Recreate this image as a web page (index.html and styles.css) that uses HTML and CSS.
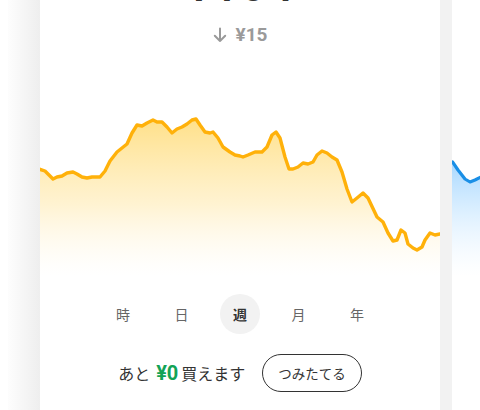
FILE: index.html
```html
<!DOCTYPE html>
<html lang="ja">
<head>
<meta charset="utf-8">
<title>積立</title>
<link rel="stylesheet" href="styles.css">
</head>
<body>
<div class="stage">
  <div class="edge"></div>
  <section class="card">
    <div class="amount">¥164</div>
    <div class="change">
      <svg class="arrow" width="14" height="16" viewBox="0 0 14 16"><path d="M7 1.5V14M1.8 8.8L7 14l5.2-5.2" fill="none" stroke="currentColor" stroke-width="2" stroke-linecap="round" stroke-linejoin="round"/></svg>
      <span>¥15</span>
    </div>
    <svg class="chart" width="400" height="180" viewBox="40 100 400 180">
      <defs>
        <linearGradient id="gold" x1="0" y1="118" x2="0" y2="276" gradientUnits="userSpaceOnUse">
          <stop offset="0" stop-color="#ffd766" stop-opacity="0.78"/>
          <stop offset="0.55" stop-color="#ffe49a" stop-opacity="0.45"/>
          <stop offset="1" stop-color="#fff3d6" stop-opacity="0"/>
        </linearGradient>
      </defs>
      <path fill="url(#gold)" d="M39 169L45 171L53 179L57 177L62 176L67 173L73 172L77 174L82 177L87 178L92 177L100 177L105 171L110 161L117 152L122 148L127 144L132 133L137 125L142 126L147 123L153 120L157 122L162 122L167 127L172 133L177 129L182 127L187 124L192 120L196 119L200 125L205 132L210 133L213 132L218 138L223 147L230 152L235 155L240 156L243 157L248 155L255 152L262 152L267 147L272 135L276 132L280 138L285 157L289 169L293 169L298 167L303 163L308 164L313 162L317 155L322 151L327 153L332 157L337 160L342 172L347 189L352 202L357 198L363 193L368 198L377 217L383 222L388 233L393 241L397 240L401 230L405 233L408 244L413 248L417 250L422 247L425 240L430 233L435 235L440 234L440 280L39 280Z"/>
      <polyline fill="none" stroke="#ffb10a" stroke-width="3.4" stroke-linejoin="round" stroke-linecap="round" points="39,169 45,171 53,179 57,177 62,176 67,173 73,172 77,174 82,177 87,178 92,177 100,177 105,171 110,161 117,152 122,148 127,144 132,133 137,125 142,126 147,123 153,120 157,122 162,122 167,127 172,133 177,129 182,127 187,124 192,120 196,119 200,125 205,132 210,133 213,132 218,138 223,147 230,152 235,155 240,156 243,157 248,155 255,152 262,152 267,147 272,135 276,132 280,138 285,157 289,169 293,169 298,167 303,163 308,164 313,162 317,155 322,151 327,153 332,157 337,160 342,172 347,189 352,202 357,198 363,193 368,198 377,217 383,222 388,233 393,241 397,240 401,230 405,233 408,244 413,248 417,250 422,247 425,240 430,233 435,235 440,234"/>
    </svg>
    <nav class="tabs">
      <span class="tab">時</span>
      <span class="tab">日</span>
      <span class="tab active">週</span>
      <span class="tab">月</span>
      <span class="tab">年</span>
    </nav>
    <div class="buy">
      <p class="remain">あと<b class="yen">¥0</b>買えます</p>
      <button class="cta" type="button">つみたてる</button>
    </div>
  </section>
  <div class="gap"></div>
  <section class="card next">
    <svg class="chart mini" width="28" height="180" viewBox="452 100 28 180">
      <defs>
        <linearGradient id="sky" x1="0" y1="160" x2="0" y2="276" gradientUnits="userSpaceOnUse">
          <stop offset="0" stop-color="#8fcdff" stop-opacity="0.8"/>
          <stop offset="1" stop-color="#d8eeff" stop-opacity="0"/>
        </linearGradient>
      </defs>
      <path fill="url(#sky)" d="M452 162L458 170L465 179L470 182L475 180L480 177L480 280L452 280Z"/>
      <polyline fill="none" stroke="#1a8fe6" stroke-width="3.2" stroke-linejoin="round" stroke-linecap="round" points="452.5,162 458,170 465,179 470,182 475,180 481,177"/>
    </svg>
  </section>
</div>
</body>
</html>
```
FILE: styles.css
```css
body {
  margin: 0;
  background: #fff;
  font-family: "Noto Sans CJK JP", sans-serif;
}

.stage {
  display: flex;
  height: 410px;
  overflow: hidden;
}

.edge {
  flex: none;
  width: 32px;
  margin-left: 8px;
  background: linear-gradient(to right, #fdfdfd, #eeeeee);
}

.card {
  flex: none;
  width: 400px;
  background: #fff;
  display: flex;
  flex-direction: column;
  align-items: center;
}

.gap {
  flex: none;
  width: 12px;
  background: #f2f2f2;
}

.card.next {
  flex: 1;
  width: auto;
  padding-top: 100px;
  align-items: flex-start;
  overflow: hidden;
}

.amount {
  margin-top: -43px;
  height: 55px;
  font: 500 48px/56px Roboto, sans-serif;
  color: #333;
}

.change {
  display: flex;
  align-items: center;
  gap: 9px;
  height: 24px;
  margin-top: 11px;
  color: #9a9a9a;
  font: 700 19px/24px Roboto, sans-serif;
}

.arrow {
  display: block;
}

.chart {
  display: block;
  margin-top: 53px;
}

.chart.mini {
  margin-top: 0;
}

.tabs {
  display: flex;
  gap: 18.5px;
  margin-top: 14px;
}

.tab {
  width: 40px;
  height: 40px;
  border-radius: 50%;
  display: flex;
  align-items: center;
  justify-content: center;
  font-size: 14px;
  color: #666;
}

.tab.active {
  background: #f2f2f2;
  color: #333;
  font-weight: 700;
}

.buy {
  display: flex;
  align-items: center;
  gap: 17px;
  margin-top: 20px;
}

.remain {
  margin: 0;
  display: flex;
  align-items: baseline;
  font-size: 16px;
  color: #333;
}

.yen {
  margin: 0 3px 0 6px;
  font: 700 20px Roboto, sans-serif;
  color: #13a356;
}

.cta {
  height: 38px;
  padding: 0 15px;
  border: 1.5px solid #333;
  border-radius: 19px;
  background: #fff;
  font: 13.5px "Noto Sans CJK JP", sans-serif;
  color: #333;
}
```
